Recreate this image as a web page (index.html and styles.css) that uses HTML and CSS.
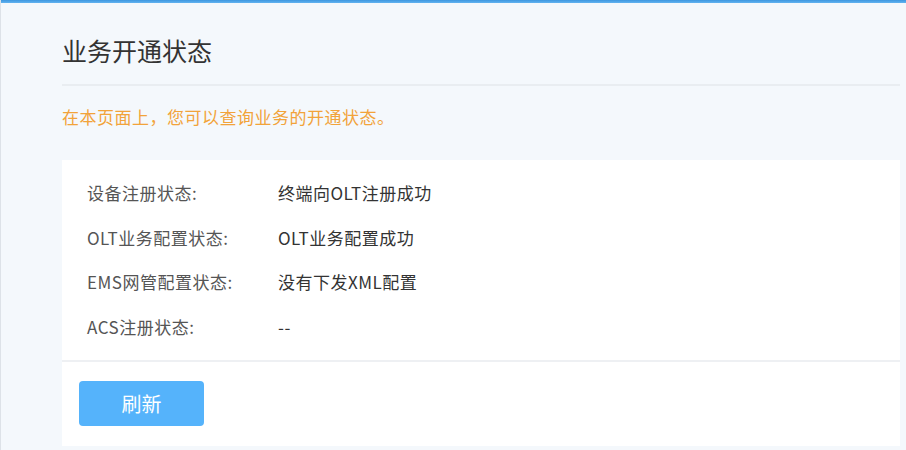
FILE: index.html
```html
<!DOCTYPE html>
<html lang="zh-CN">
<head>
    <meta charset="UTF-8">
    <title>业务开通状态</title>
    <link rel="stylesheet" href="styles.css">
</head>
<body>
    <div class="top-bar"></div>
    <div class="page">
        <div class="page-head">
            <h1 class="page-title">业务开通状态</h1>
        </div>
        <p class="page-tip">在本页面上，您可以查询业务的开通状态。</p>

        <div class="status-panel">
            <div class="status-list">
                <div class="status-label">设备注册状态:</div>
                <div class="status-value">终端向OLT注册成功</div>

                <div class="status-label">OLT业务配置状态:</div>
                <div class="status-value">OLT业务配置成功</div>

                <div class="status-label">EMS网管配置状态:</div>
                <div class="status-value">没有下发XML配置</div>

                <div class="status-label">ACS注册状态:</div>
                <div class="status-value">--</div>
            </div>
            <div class="panel-foot">
                <button class="btn-refresh" type="button">刷新</button>
            </div>
        </div>
    </div>
</body>
</html>
```

FILE: styles.css
```css
:root {
    --bg-color: #f4f8fc;
    --text-color: #333;
    --label-color: #555;
    --line-color: #e9edf1;
    --tip-color: #f2a33a;
    --btn-color: #55b3fb;
}

html, body {
    height: 100%;
}

body {
    margin: 0;
    background: var(--bg-color);
    border-left: 1px solid #dde2e8;
    font-family: "Noto Sans CJK SC", "Noto Sans", sans-serif;
    color: var(--text-color);
    overflow: hidden;
}

.top-bar {
    height: 3px;
    background: linear-gradient(to bottom, #3d97e0, #62b3f0);
}

.page {
    padding: 0 6px 0 61px;
}

.page-head {
    margin-top: 30px;
    padding-bottom: 17px;
    border-bottom: 2px solid var(--line-color);
}

.page-title {
    margin: 0;
    font-size: 25px;
    line-height: 34px;
    font-weight: 400;
    color: var(--text-color);
}

.page-tip {
    margin: 19px 0 31px;
    font-size: 17px;
    line-height: 24px;
    letter-spacing: 0.5px;
    color: var(--tip-color);
}

.status-panel {
    background: #fff;
}

.status-list {
    display: grid;
    grid-template-columns: 191px 1fr;
    padding: 11px 0 11px 25px;
    border-bottom: 2px solid #eef0f3;
    font-size: 17px;
    line-height: 44.5px;
    letter-spacing: 0.5px;
}

.status-label {
    color: var(--label-color);
}

.status-value {
    color: var(--text-color);
}

.panel-foot {
    padding: 19px 17px 20px;
}

.btn-refresh {
    display: block;
    width: 125px;
    height: 45px;
    border: none;
    border-radius: 4px;
    background: var(--btn-color);
    color: #fff;
    font-family: inherit;
    font-size: 20px;
    cursor: pointer;
}
```
